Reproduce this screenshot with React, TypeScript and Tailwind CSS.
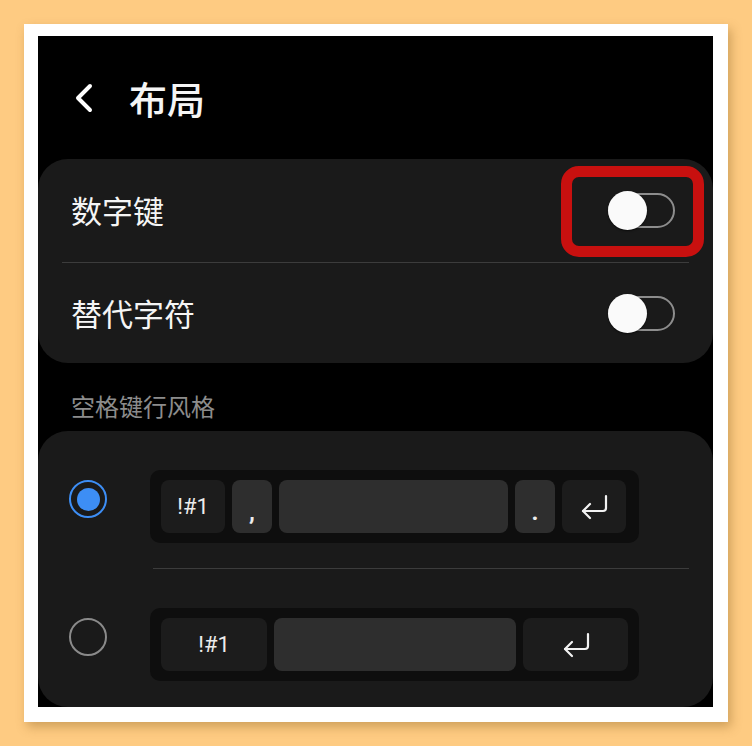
import React from 'react';

const font = { fontFamily: '"Noto Sans CJK SC", "Noto Sans", sans-serif' };
const keyFont = { fontFamily: 'Roboto, "Noto Sans", sans-serif' };

const Toggle: React.FC = () => (
  <div className="relative w-[67px] h-[35px]">
    <div className="absolute inset-0 rounded-full border-2 border-[#8d8d8d] bg-[#1a1a1a]" />
    <div className="absolute left-0 top-[-2px] w-[39px] h-[39px] rounded-full bg-[#fafafa] shadow-[0_1px_2px_rgba(0,0,0,0.6)]" />
  </div>
);

const EnterIcon: React.FC = () => (
  <svg width="28" height="26" viewBox="0 0 28 26" fill="none" stroke="#f2f2f2" strokeWidth="2.2" strokeLinecap="round" strokeLinejoin="round">
    <path d="M26 2 V14 Q26 17 23 17 H3" />
    <path d="M10 10 L3 17 L10 24" />
  </svg>
);

const Key: React.FC<{ w: string; light?: boolean; children?: React.ReactNode }> = ({ w, light, children }) => (
  <div
    className={`${w} h-[53px] rounded-[8px] flex items-center justify-center text-[22px] text-[#ececec] ${light ? 'bg-[#2e2e2e]' : 'bg-[#1c1c1c]'}`}
    style={keyFont}
  >
    {children}
  </div>
);

const Radio: React.FC<{ on?: boolean }> = ({ on }) =>
  on ? (
    <div className="w-[38px] h-[38px] rounded-full border-2 border-[#3d8ef5] flex items-center justify-center">
      <div className="w-[23px] h-[23px] rounded-full bg-[#3d8ef5]" />
    </div>
  ) : (
    <div className="w-[38px] h-[38px] rounded-full border-2 border-[#8a8a8a]" />
  );

export default function App() {
  return (
    <div className="w-[752px] h-[746px] bg-[#fecb82] pt-[24px] pl-[24px] overflow-hidden" style={font}>
      <div className="w-[704px] h-[698px] bg-white pt-[12px] pl-[14px] shadow-[3px_5px_10px_rgba(120,80,20,0.35)]">
        <div className="w-[675px] h-[671px] bg-black overflow-hidden text-[#f5f5f5]">
          {/* header */}
          <div className="h-[123px] flex items-center">
            <svg className="ml-[36px]" width="20" height="30" viewBox="0 0 20 30" fill="none" stroke="#fff" strokeWidth="4" strokeLinecap="round" strokeLinejoin="round">
              <path d="M16 3 L4 15 L16 27" />
            </svg>
            <span className="ml-[35px] text-[38px] font-medium leading-none">布局</span>
          </div>

          {/* toggles card */}
          <div className="rounded-[30px] bg-[#1a1a1a]">
            <div className="relative h-[103px] flex items-center justify-between pl-[33px] pr-[38px]">
              <span className="text-[31px]">数字键</span>
              <Toggle />
              <div className="absolute top-[7px] right-[9px] w-[143px] h-[91px] rounded-[18px] border-[11px] border-[#c8100f]" />
            </div>
            <div className="mx-[24px] h-px bg-[#3c3c3c]" />
            <div className="h-[100px] flex items-center justify-between pl-[33px] pr-[38px]">
              <span className="text-[31px]">替代字符</span>
              <Toggle />
            </div>
          </div>

          <div className="mt-[27px] pl-[33px] text-[24px] leading-[32px] text-[#8c8c8c]">空格键行风格</div>

          {/* space row style card */}
          <div className="mt-[9px] rounded-[30px] bg-[#1a1a1a] pt-[39px] pb-[26px]">
            <div className="flex items-start">
              <div className="ml-[31px] mt-[10px] w-[81px]">
                <Radio on />
              </div>
              <div className="w-[489px] h-[73px] rounded-[10px] bg-[#0e0e0e] px-[11px] flex items-center gap-[7px]">
                <Key w="w-[64px]">!#1</Key>
                <Key w="w-[40px]" light>
                  <span className="text-[24px] font-bold mt-[10px]">,</span>
                </Key>
                <Key w="w-[229px]" light />
                <Key w="w-[40px]" light>
                  <span className="text-[24px] font-bold mt-[10px]">.</span>
                </Key>
                <Key w="w-[64px]">
                  <EnterIcon />
                </Key>
              </div>
            </div>
            <div className="ml-[115px] mr-[24px] mt-[25px] h-px bg-[#3c3c3c]" />
            <div className="flex items-start mt-[39px]">
              <div className="ml-[31px] mt-[10px] w-[81px]">
                <Radio />
              </div>
              <div className="w-[489px] h-[73px] rounded-[10px] bg-[#0e0e0e] px-[11px] flex items-center gap-[7px]">
                <Key w="w-[106px]">!#1</Key>
                <Key w="w-[242px]" light />
                <Key w="w-[105px]">
                  <EnterIcon />
                </Key>
              </div>
            </div>
          </div>
        </div>
      </div>
    </div>
  );
}
